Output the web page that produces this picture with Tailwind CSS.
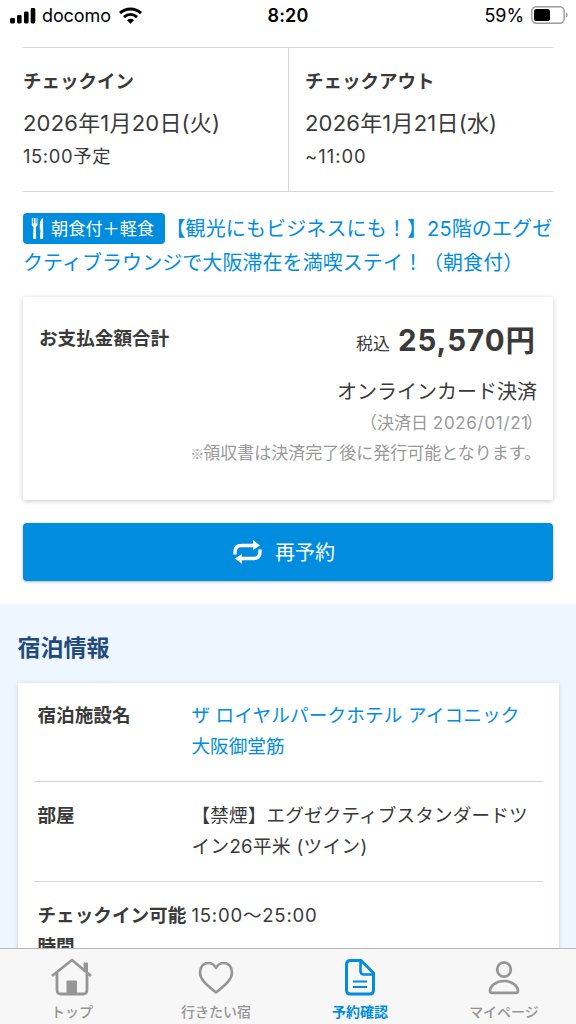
<!DOCTYPE html>
<html lang="ja">
<head>
<meta charset="utf-8">
<title>予約確認</title>
<script src="https://cdn.jsdelivr.net/npm/@tailwindcss/browser@4"></script>
</head>
<body class="flex h-[1024px] w-[576px] flex-col overflow-hidden bg-white font-['Inter','Noto_Sans_CJK_JP',sans-serif] text-[#3a3a3a]">
<header class="grid h-[47px] shrink-0 grid-cols-3 pb-[15px] text-black">
  <div class="flex items-center pl-[10px]">
    <svg class="h-[17px] w-[26px] -translate-y-px" viewBox="0 0 26 17"><rect x="0" y="11" width="5" height="5.5" rx="1.4"/><rect x="7" y="8" width="4.6" height="8.5" rx="1.4"/><rect x="14" y="4.5" width="4.6" height="12" rx="1.4"/><rect x="20.7" y="1" width="4.6" height="15.5" rx="1.4"/></svg>
    <span class="ml-[6px] w-[70px] whitespace-nowrap text-[18px] leading-8 tracking-[-0.1px]">docomo</span>
    <svg class="ml-[7px] h-[17px] w-[23px] -translate-y-px" viewBox="0 0 23 17" fill="none" stroke="#000" stroke-width="3"><path d="M1 6.2C7 .7 16 .7 22 6.2"/><path d="M5 10.2c4-3.6 9-3.6 13 0"/><path d="M8 13.2c2-1.8 5-1.8 7 0L11.500 16.700z" fill="#000" stroke="none"/></svg>
  </div>
  <div class="text-center text-[18px] font-semibold leading-8 tracking-[0.2px]">8:20</div>
  <div class="flex items-center justify-end pr-[8px]">
    <span class="text-[18px] leading-8 tracking-[-0.1px]">59%</span>
    <svg class="ml-[7px] h-[18px] w-[37px] -translate-y-px" viewBox="0 0 37 18"><rect x=".8" y=".8" width="32.4" height="16.4" rx="4.5" fill="none" stroke="#999" stroke-width="1.4"/><rect x="3" y="3" width="16" height="12" rx="2.6"/><path d="M35 6.3c2 .8 2 4.6 0 5.4z" fill="#999"/></svg>
  </div>
</header>

<section class="mx-[23px] grid h-[145px] shrink-0 grid-cols-[266px_1fr] border-y-[1.5px] border-[#d6d6d6]">
  <div class="border-r-[1.5px] border-[#d6d6d6] pt-[19px]">
    <h2 class="text-[18.5px] font-bold leading-7">チェックイン</h2>
    <p class="mt-[12px] text-[22px] leading-8 tracking-[0.2px]">2026年1月20日(火)</p>
    <p class="mt-[3px] text-[18.4px] leading-7 tracking-[0.600px]">15:00予定</p>
  </div>
  <div class="pl-[16px] pt-[19px]">
    <h2 class="text-[18.5px] font-bold leading-7">チェックアウト</h2>
    <p class="mt-[12px] text-[22px] leading-8 tracking-[0.2px]">2026年1月21日(水)</p>
    <p class="mt-[3px] text-[18.4px] leading-7 tracking-[1px]">~11:00</p>
  </div>
</section>

<a class="mx-[23px] mt-[20px] block shrink-0 whitespace-nowrap text-[20px] leading-[34px] text-[#008ddf]">
  <span class="flex items-center">
    <span class="flex h-[31px] w-[141.5px] shrink-0 -translate-y-px items-center rounded-[4px] bg-[#008ddf] pl-[8px] text-[17.2px] text-white">
      <svg class="mr-[7px] h-[23px] w-[13px]" viewBox="0 0 13 23" fill="#fff"><path d="M.8 1v6.3c0 1.5.8 2.3 1.7 2.7L2 20.5c0 2 3.2 2 3.2 0L4.8 10c1-.4 1.7-1.2 1.7-2.7V1h-.9v5.5h-1V1h-1.8v5.5h-1V1zM12 .7C9.800 1.700 8.800 5 8.800 8.500v4h.7L9 20.500c0 2 3.200 2 3.200 0z"/></svg><span class="pt-[2px]">朝食付＋軽食</span></span>
    <span class="ml-px tracking-[0.120px]">【観光にもビジネスにも！】25階のエグゼ</span>
  </span>
  <span class="block tracking-[0.060px]">クティブラウンジで大阪滞在を満喫ステイ！（朝食付）</span>
</a>

<section class="mx-[23px] mt-[17px] flex h-[203px] shrink-0 justify-between rounded-[2px] bg-white px-[16px] pt-[21px] shadow-[0_1px_5px_rgba(0,0,0,0.22)]">
  <h2 class="text-[18.6px] font-bold leading-10">お支払金額合計</h2>
  <div class="flex flex-col items-end whitespace-nowrap">
    <p class="flex leading-[44px]"><span class="mr-[8px] pt-[4px] text-[17px]">税込</span><span class="mr-[2px] text-[29.5px] font-bold tracking-[0.950px]">25,570<span class="tracking-normal">円</span></span></p>
    <p class="mt-[10px] text-[20px] leading-8">オンラインカード決済</p>
    <p class="mr-[-6px] text-[17px] leading-[30px] text-[#999]">（決済日 <span class="tracking-[0.7px]">2026/01/21</span><span class="ml-[-3px]">）</span></p>
    <p class="mr-[-4px] text-[17px] leading-[30px] text-[#999]"><span class="mr-[-1px] font-['Noto_Sans_CJK_JP'] text-[14px]">※</span>領収書は決済完了後に発行可能となります。</p>
  </div>
</section>

<button class="mx-[23px] mt-[23px] flex h-[58px] shrink-0 items-center justify-center rounded-[4px] bg-[#008ddf] pr-[8px] text-[20px] text-white shadow-[0_1px_3px_rgba(0,0,0,0.3)]">
  <svg class="mr-[13px] h-[24px] w-[29px]" viewBox="0 0 29 24" fill="none" stroke="#fff" stroke-width="3.400"><path d="M2 14.500v-2.500q0-6.500 6.500-6.500H21M27 9.500V12q0 6.500-6.500 6.500H8"/><path d="M20 0l7 5.500-7 4.500zM9 14l-7 4.500L9 24z" fill="#fff" stroke="none"/></svg><span class="pt-[2px]">再予約</span>
</button>

<main class="mt-[23px] flex h-[344px] shrink-0 flex-col overflow-hidden bg-[#eef6ff] px-[17.500px] pt-[26px]">
  <h1 class="text-[23px] font-bold leading-9 text-[#214b7c]">宿泊情報</h1>
  <dl class="mt-[17px] h-[300px] shrink-0 rounded-[2px] bg-white px-[16px] text-[18.6px] leading-[31px] shadow-[0_1px_5px_rgba(0,0,0,0.16)]">
    <div class="flex h-[99px] border-b-[1.500px] border-[#d6d6d6] pl-[4px] pt-[17px]"><dt class="w-[154px] shrink-0 whitespace-nowrap font-bold">宿泊施設名</dt><dd class="whitespace-nowrap tracking-[0.150px] text-[#008ddf]">ザ ロイヤルパークホテル アイコニック<br><span class="tracking-normal">大阪御堂筋</span></dd></div>
    <div class="flex h-[100px] border-b-[1.500px] border-[#d6d6d6] pl-[4px] pt-[18px]"><dt class="w-[154px] shrink-0 font-bold">部屋</dt><dd class="whitespace-nowrap tracking-[0.150px]">【禁煙】エグゼクティブスタンダードツ<br><span class="tracking-[0.350px]">イン26平米 (ツイン)</span></dd></div>
    <div class="flex pl-[4px] pt-[18px]"><dt class="w-[154px] shrink-0 whitespace-nowrap font-bold">チェックイン可能<br>時間</dt><dd class="tracking-[0.750px]">15:00〜25:00</dd></div>
  </dl>
</main>

<nav class="grid h-[76px] shrink-0 grid-cols-4 border-t border-[#b8b8b8] bg-[#f7f7f7] text-[14px] font-medium leading-5 text-[#969696]">
  <a class="flex flex-col items-center pt-[8px]"><svg class="h-[42px] w-[44px]" viewBox="0 0 44 42" fill="none" stroke="currentColor" stroke-width="2.800" stroke-linejoin="round"><path d="M2 19L22 3l19 16M7 15v18q0 4 4 4h22q4 0 4-4V15"/><path d="M34 6h3.500v10L34 13z" fill="currentColor" stroke-width="1"/><path d="M17 24h9.500v13H17z" fill="currentColor" stroke-width="1"/></svg><span class="mt-[3px]">トップ</span></a>
  <a class="flex flex-col items-center pt-[8px]"><svg class="h-[42px] w-[44px]" viewBox="0 0 44 42" fill="none" stroke="currentColor" stroke-width="2.600" stroke-linejoin="round"><path d="M22 35.500C11 26.500 6 22 6 15.500 6 10 9.500 6 14 6c3.800 0 6.500 2 8 5 1.500-3 4.200-5 8-5 4.500 0 8 4 8 9.500 0 6.500-5 11-16 20z"/></svg><span class="mt-[3px]">行きたい宿</span></a>
  <a class="flex flex-col items-center pt-[8px] text-[#008ddf]"><svg class="h-[42px] w-[44px]" viewBox="0 0 44 42" fill="none" stroke="currentColor" stroke-width="3" stroke-linejoin="round"><path d="M12.500 3.500h10.500L35.500 16v17q0 4-4 4h-19q-4 0-4-4V7.500q0-4 4-4z"/><path d="M22.500 4v10q0 3.500 3.500 3.500h9" stroke-width="2.600"/><path d="M15 24.500h14M15 30h14" stroke-width="2"/></svg><span class="mt-[3px] font-bold">予約確認</span></a>
  <a class="flex flex-col items-center pt-[8px]"><svg class="h-[42px] w-[44px]" viewBox="0 0 44 42" fill="none" stroke="currentColor" stroke-width="2.700" stroke-linejoin="round"><ellipse cx="22" cy="12.500" rx="6.800" ry="7.200"/><path d="M22 24c8 0 14 5 14 10 0 1.300-.7 1.800-2 1.800H10c-1.300 0-2-.5-2-1.800 0-5 6-10 14-10z"/></svg><span class="mt-[3px]">マイページ</span></a>
</nav>
</body>
</html>
